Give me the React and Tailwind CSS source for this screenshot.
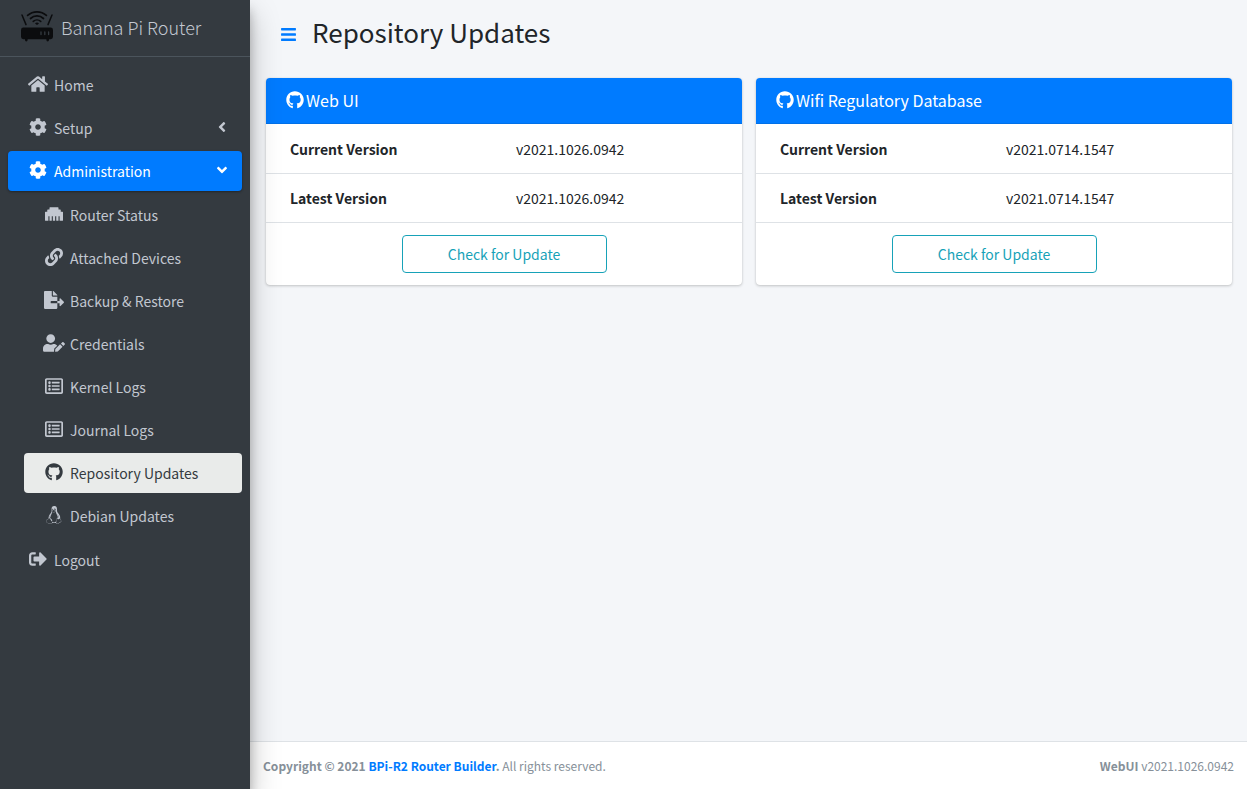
import React from "react";
import {
  FaHome, FaCog, FaEthernet, FaLink, FaFileExport, FaUserEdit, FaRegListAlt,
  FaGithub, FaLinux, FaSignOutAlt, FaAngleLeft, FaAngleDown, FaBars,
} from "react-icons/fa";

const adminItems = [
  { label: "Router Status", icon: FaEthernet },
  { label: "Attached Devices", icon: FaLink },
  { label: "Backup & Restore", icon: FaFileExport, iconWidth: "w-5" },
  { label: "Credentials", icon: FaUserEdit, iconWidth: "w-[22px]" },
  { label: "Kernel Logs", icon: FaRegListAlt },
  { label: "Journal Logs", icon: FaRegListAlt },
  { label: "Repository Updates", icon: FaGithub, current: true },
  { label: "Debian Updates", icon: FaLinux },
];

const cards = [
  { title: "Web UI", current: "v2021.1026.0942", latest: "v2021.1026.0942" },
  { title: "Wifi Regulatory Database", current: "v2021.0714.1547", latest: "v2021.0714.1547" },
];

function RouterLogo() {
  return (
    <svg viewBox="0 0 32 32" className="h-8 w-8 shrink-0" aria-hidden="true">
      <g fill="none" stroke="#0b0c0e" strokeLinecap="round">
        <path d="M1 5 5 14.6" strokeWidth="1.5" />
        <path d="M31 5 27 14.6" strokeWidth="1.5" />
        <path d="M6.6 5.4C11.8.6 20.2.6 25.4 5.4" strokeWidth="1.7" />
        <path d="M9.5 8.5c3.7-3.4 9.3-3.4 13 0" strokeWidth="1.7" />
        <path d="M12.3 11.4c2.1-1.9 5.3-1.9 7.4 0" strokeWidth="1.7" />
      </g>
      <path d="M14 13.4a2.8 2.8 0 0 1 4 0l-2 1.6z" fill="#0b0c0e" />
      <rect x="0" y="17.6" width="32" height="11.6" rx="2.4" fill="#0b0c0e" />
      <path d="M4 28.8h2.6v1.3a1.3 1.3 0 0 1-2.6 0zM25.4 28.8H28v1.3a1.3 1.3 0 0 1-2.6 0z" fill="#0b0c0e" />
      <path d="M20 22v2.6M23.8 22v2.6M27.6 22v2.6" stroke="#343a40" strokeWidth="1.3" strokeLinecap="round" />
    </svg>
  );
}

function NavLink({ icon: Icon, label, current, iconWidth = "w-[18px]" }) {
  return (
    <a
      href="#"
      aria-current={current ? "page" : undefined}
      className={`flex h-10 items-center rounded pl-4 pr-3 ${current ? "bg-[#e9ebea] text-[#343a40]" : ""}`}
    >
      <span className="mr-[3px] flex w-[27px] shrink-0 justify-center pb-0.5">
        <Icon className={`h-[18px] ${iconWidth}`} />
      </span>
      {label}
    </a>
  );
}

function NavToggle({ icon: Icon, label, open }) {
  const Arrow = open ? FaAngleDown : FaAngleLeft;
  return (
    <button
      type="button"
      aria-expanded={open}
      className={`flex h-10 w-full items-center rounded pl-4 pr-3 text-left ${open ? "bg-[#007bff] text-white shadow-[0_1px_3px_rgba(0,0,0,0.12),0_1px_2px_rgba(0,0,0,0.24)]" : ""}`}
    >
      <span className="mr-[3px] flex w-[27px] shrink-0 justify-center pb-0.5">
        <Icon className="h-[18px] w-[18px]" />
      </span>
      <span className="grow">{label}</span>
      <span className="flex w-4 justify-center pb-0.5">
        <Arrow className="h-4 w-4" />
      </span>
    </button>
  );
}

function VersionCard({ title, current, latest }) {
  return (
    <section className="overflow-hidden rounded bg-white shadow-[0_0_1px_rgba(0,0,0,0.125),0_1px_3px_rgba(0,0,0,0.2)]">
      <h2 className="flex h-[46px] items-center gap-0.5 border-b border-[#0070e8] bg-[#007bff] px-5 pb-px text-base text-white">
        <FaGithub className="h-[18px] w-[18px]" />
        {title}
      </h2>
      <table className="w-full table-fixed border-collapse text-left">
        <tbody>
          <tr className="h-[49px]">
            <th scope="row" className="pl-6 pt-0.5 font-bold">Current Version</th>
            <td className="pl-3 pt-0.5">{current}</td>
          </tr>
          <tr className="h-[49px] border-y border-[#dee2e6]">
            <th scope="row" className="pl-6 font-bold">Latest Version</th>
            <td className="pl-3">{latest}</td>
          </tr>
        </tbody>
      </table>
      <div className="flex justify-center p-3">
        <button type="button" className="h-[38px] w-[205px] rounded border border-[#17a2b8] text-[#17a2b8]">
          Check for Update
        </button>
      </div>
    </section>
  );
}

export default function App() {
  return (
    <div className="flex min-h-screen bg-[#f4f6f9] font-['Source_Sans_Pro','Noto_Sans_CJK_SC',sans-serif] text-[14px] leading-6 text-[#212529]">
      <aside className="z-10 w-[250px] shrink-0 bg-[#343a40] text-[#c2c7d0] shadow-[0_14px_28px_rgba(0,0,0,0.25),0_10px_10px_rgba(0,0,0,0.22)]">
        <a href="#" className="flex h-[57px] items-start gap-2 border-b border-[#4b545c] pl-[21px] pt-[10px] text-[18px] font-light leading-[34px]">
          <RouterLogo />
          Banana Pi Router
        </a>
        <nav className="p-2">
          <ul className="flex flex-col gap-[3px]">
            <li><NavLink icon={FaHome} label="Home" iconWidth="w-5" /></li>
            <li><NavToggle icon={FaCog} label="Setup" open={false} /></li>
            <li>
              <NavToggle icon={FaCog} label="Administration" open />
              <ul className="flex flex-col gap-[3px] pb-px pl-4 pt-1">
                {adminItems.map((item) => (
                  <li key={item.label}><NavLink {...item} /></li>
                ))}
              </ul>
            </li>
            <li><NavLink icon={FaSignOutAlt} label="Logout" /></li>
          </ul>
        </nav>
      </aside>

      <div className="flex min-w-0 grow flex-col">
        <main className="grow pl-4 pr-[15px]">
          <header className="flex h-[78px] items-center gap-[15px] pb-[14px] pl-[14px]">
            <button type="button" aria-label="Toggle menu" className="pt-1 text-[#007bff]">
              <FaBars className="h-[17px] w-[17px]" />
            </button>
            <h1 className="text-[26px] leading-9">Repository Updates</h1>
          </header>
          <div className="grid grid-cols-2 gap-[14px]">
            {cards.map((card) => (
              <VersionCard key={card.title} {...card} />
            ))}
          </div>
        </main>
        <footer className="flex h-12 items-center justify-between border-t border-[#dee2e6] bg-white px-[13px] text-[12px] text-[#869099]">
          <p>
            <strong>
              Copyright © 2021 <a href="#" className="text-[#007bff]">BPi-R2 Router Builder</a>.
            </strong>{" "}
            All rights reserved.
          </p>
          <p><b>WebUI</b> v2021.1026.0942</p>
        </footer>
      </div>
    </div>
  );
}
